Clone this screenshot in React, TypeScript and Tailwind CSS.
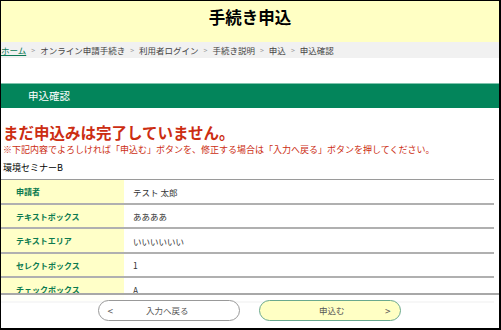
import React from "react";

const crumbs = ["オンライン申請手続き", "利用者ログイン", "手続き説明", "申込", "申込確認"];

const rows = [
  { label: "申請者", value: "テスト 太郎" },
  { label: "テキストボックス", value: "ああああ" },
  { label: "テキストエリア", value: "いいいいいい" },
  { label: "セレクトボックス", value: "1" },
  { label: "チェックボックス", value: "A" },
];

export default function App() {
  return (
    <div
      className="relative w-[501px] h-[330px] overflow-hidden bg-white border-t border-l border-r-2 border-b-2 border-black text-[#333]"
      style={{ fontFamily: '"Noto Sans CJK JP", "Noto Sans", sans-serif' }}
    >
      {/* Header */}
      <header className="h-[41px] bg-[#ffffc4] flex justify-center pt-[7px]">
        <h1 className="text-[16.5px] font-bold text-black leading-[18px]">手続き申込</h1>
      </header>

      {/* Breadcrumb */}
      <nav className="h-[16px] bg-[#f1f1f1] flex items-center text-[8.5px] leading-none text-[#444]">
        <a className="text-[#0b7a55] underline underline-offset-1">ホーム</a>
        {crumbs.map((c) => (
          <React.Fragment key={c}>
            <span className="mx-[5px] text-[#999] text-[7px]">&gt;</span>
            <span>{c}</span>
          </React.Fragment>
        ))}
      </nav>

      <div className="h-[25px]" />

      {/* Section title */}
      <div className="h-[25px] bg-[#03855b] border-t border-[#7fc4ad] flex items-center pl-[27px]">
        <span className="text-white text-[10.5px]">申込確認</span>
      </div>

      <div className="pt-[14px] pl-[2px]">
        <p className="text-[#cc2d12] text-[15.5px] font-bold leading-[20px]">まだ申込みは完了していません。</p>
        <p className="text-[#cc2d12] text-[9px] leading-[12px] mt-[2px]">
          ※下記内容でよろしければ「申込む」ボタンを、修正する場合は「入力へ戻る」ボタンを押してください。
        </p>
        <p className="text-black text-[9px] leading-[12px] mt-[6px]">環境セミナーB</p>
      </div>

      {/* Table */}
      <div className="mt-[5px] mr-[5px] border-t border-[#9a9a9a]">
        {rows.map((r) => (
          <div key={r.label} className="flex h-[24.5px] border-b-2 border-[#b0b0b0]">
            <div className="w-[123px] bg-[#ffffc8] flex items-center pl-[15px] pt-[2px] text-[8px] font-bold text-[#0b7a4f]">
              {r.label}
            </div>
            <div className="flex-1 flex items-center pl-[9px] pt-[2px] text-[8.5px] text-[#333]">{r.value}</div>
          </div>
        ))}
      </div>

      {/* Fixed footer */}
      <div className="absolute left-0 right-0 bottom-0 h-[35px] bg-white/90 border-t-2 border-[#a8a8a8] flex justify-center items-start pt-[5px] gap-[19px] pr-[2px]">
        <button className="w-[142px] h-[21px] rounded-full border border-[#999] bg-white flex items-center px-[9px] text-[8.5px] text-[#555]">
          <span className="text-[10px]">&lt;</span>
          <span className="flex-1 text-center pr-[8px]">入力へ戻る</span>
        </button>
        <button className="w-[142px] h-[21px] rounded-full border border-[#6aa88d] bg-[#ffffc4] flex items-center px-[9px] text-[8.5px] text-[#555]">
          <span className="flex-1 text-center pl-[10px]">申込む</span>
          <span className="text-[10px]">&gt;</span>
        </button>
      </div>
    </div>
  );
}
